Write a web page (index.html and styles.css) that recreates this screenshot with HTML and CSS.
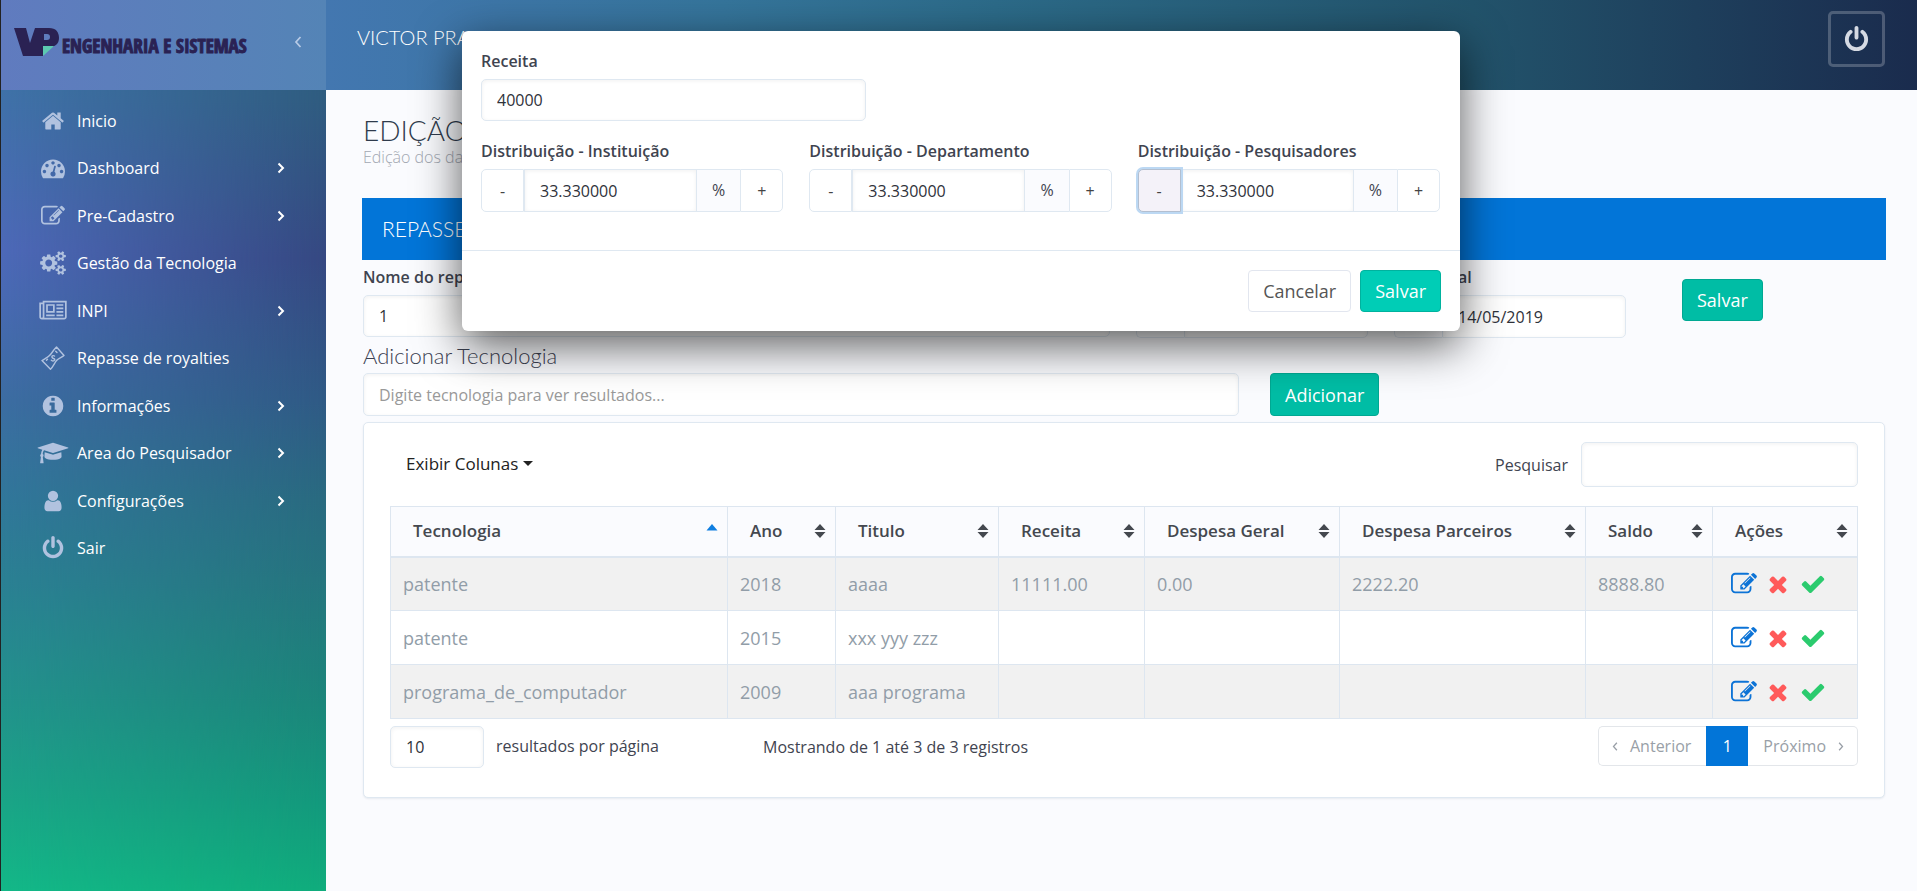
FILE: index.html
```html
<!DOCTYPE html>
<html lang="pt-BR">
<head>
<meta charset="utf-8">
<title>Repasse de royalties</title>
<link rel="stylesheet" href="styles.css">
</head>
<body>
<svg class="sprite" aria-hidden="true">
  <symbol id="i-home" viewBox="0 0 1792 1792"><path d="M1472 992v480q0 26-19 45t-45 19h-384v-384h-256v384h-384q-26 0-45-19t-19-45v-480q0-1 .5-3t.5-3l575-474 575 474q1 2 1 6zm223-69l-62 74q-8 9-21 11h-3q-13 0-21-7l-692-577-692 577q-12 8-24 7-13-2-21-11l-62-74q-8-10-7-23.5t11-21.5l719-599q32-26 76-26t76 26l244 204v-195q0-14 9-23t23-9h192q14 0 23 9t9 23v408l219 182q10 8 11 21.5t-7 23.5z"/></symbol>
  <symbol id="i-dash" viewBox="0 0 1792 1792"><path d="M384 1152q0-53-37.5-90.5t-90.5-37.5-90.5 37.5-37.5 90.5 37.5 90.5 90.5 37.5 90.5-37.5 37.5-90.5zm192-448q0-53-37.5-90.5t-90.5-37.5-90.5 37.5-37.5 90.5 37.5 90.5 90.5 37.5 90.5-37.5 37.5-90.5zm428 481l101-382q6-26-7.5-48.5t-38.5-29.5-48 6.5-30 39.5l-101 382q-60 5-107 43.5t-63 98.5q-20 77 20 146t117 89 146-20 89-117q16-60-6-117t-72-91zm660-33q0-53-37.5-90.5t-90.5-37.5-90.5 37.5-37.5 90.5 37.5 90.5 90.5 37.5 90.5-37.5 37.5-90.5zm-640-640q0-53-37.5-90.5t-90.5-37.5-90.5 37.5-37.5 90.5 37.5 90.5 90.5 37.5 90.5-37.5 37.5-90.5zm448 192q0-53-37.5-90.5t-90.5-37.5-90.5 37.5-37.5 90.5 37.5 90.5 90.5 37.5 90.5-37.5 37.5-90.5zm320 448q0 261-141 483-19 29-54 29h-1402q-35 0-54-29-141-221-141-483 0-182 71-348t191-286 286-191 348-71 348 71 286 191 191 286 71 348z"/></symbol>
  <symbol id="i-edit" viewBox="0 0 1792 1792"><path d="M888 1184l116-116-152-152-116 116v56h96v96h56zm440-720q-16-16-33 1l-350 350q-17 17-1 33t33-1l350-350q17-17 1-33zm80 594v190q0 119-84.5 203.5t-203.5 84.5h-832q-119 0-203.5-84.5t-84.5-203.5v-832q0-119 84.5-203.5t203.5-84.5h832q63 0 117 25 15 7 18 23 3 17-9 29l-49 49q-14 14-32 8-23-6-45-6h-832q-66 0-113 47t-47 113v832q0 66 47 113t113 47h832q66 0 113-47t47-113v-126q0-13 9-22l64-64q15-15 35-7t20 29zm-96-738l288 288-672 672h-288v-288zm444 132l-92 92-288-288 92-92q28-28 68-28t68 28l152 152q28 28 28 68t-28 68z"/></symbol>
  <symbol id="i-cogs" viewBox="0 0 1920 1792"><path d="M896 896q0-106-75-181t-181-75-181 75-75 181 75 181 181 75 181-75 75-181zm768 512q0-52-38-90t-90-38-90 38-38 90q0 53 37.5 90.5t90.5 37.5 90.5-37.5 37.5-90.5zm0-1024q0-52-38-90t-90-38-90 38-38 90q0 53 37.5 90.5t90.5 37.5 90.5-37.5 37.5-90.5zm-384 421v185q0 10-7 19.5t-16 10.5l-155 24q-11 35-32 76 34 48 90 115 7 11 7 20 0 12-7 19-23 30-82.5 89.5t-78.5 59.5q-11 0-21-7l-115-90q-37 19-77 31-11 108-23 155-7 24-30 24h-186q-11 0-20-7.5t-10-17.5l-23-153q-34-10-75-31l-118 89q-7 7-20 7-11 0-21-8-144-133-144-160 0-9 7-19 10-14 41-53t47-61q-23-44-35-82l-152-24q-10-1-17-9.5t-7-19.5v-185q0-10 7-19.5t16-10.5l155-24q11-35 32-76-34-48-90-115-7-11-7-20 0-12 7-20 22-30 82-89t79-59q11 0 21 7l115 90q34-18 77-32 11-108 23-154 7-24 30-24h186q11 0 20 7.5t10 17.5l23 153q34 10 75 31l118-89q8-7 20-7 11 0 21 8 144 133 144 160 0 8-7 19-12 16-42 54t-45 60q23 48 34 82l152 23q10 2 17 10.5t7 19.5zm640 533v140q0 16-149 31-12 27-30 52 51 113 51 138 0 4-4 7-122 71-124 71-8 0-46-47t-52-68q-20 2-30 2t-30-2q-14 21-52 68t-46 47q-2 0-124-71-4-3-4-7 0-25 51-138-18-25-30-52-149-15-149-31v-140q0-16 149-31 13-29 30-52-51-113-51-138 0-4 4-7 4-2 35-20t59-34 30-16q8 0 46 46.5t52 67.5q20-2 30-2t30 2q51-71 92-112l6-2q4 0 124 70 4 3 4 7 0 25-51 138 17 23 30 52 149 15 149 31zm0-1024v140q0 16-149 31-12 27-30 52 51 113 51 138 0 4-4 7-122 71-124 71-8 0-46-47t-52-68q-20 2-30 2t-30-2q-14 21-52 68t-46 47q-2 0-124-71-4-3-4-7 0-25 51-138-18-25-30-52-149-15-149-31v-140q0-16 149-31 13-29 30-52-51-113-51-138 0-4 4-7 4-2 35-20t59-34 30-16q8 0 46 46.5t52 67.5q20-2 30-2t30 2q51-71 92-112l6-2q4 0 124 70 4 3 4 7 0 25-51 138 17 23 30 52 149 15 149 31z"/></symbol>
  <symbol id="i-news" viewBox="0 0 2048 1792"><path d="M1024 512h-384v384h384v-384zm128 640v128h-640v-128h640zm0-768v640h-640v-640h640zm640 768v128h-512v-128h512zm0-256v128h-512v-128h512zm0-256v128h-512v-128h512zm0-256v128h-512v-128h512zm-1536 960v-960h-128v960q0 26 19 45t45 19 45-19 19-45zm1664 0v-1088h-1536v1088q0 33-11 64h1483q26 0 45-19t19-45zm128-1216v1216q0 80-56 136t-136 56h-1664q-80 0-136-56t-56-136v-1088h256v-128h1792z"/></symbol>
  <symbol id="i-note" viewBox="0 0 24 24"><g fill="none" stroke="currentColor" stroke-width="1.4" stroke-linejoin="round" stroke-linecap="round"><path d="M1 14.500C5 12 7.500 11 9.500 8.500S13 3.500 15.500 1L23 9.500C20 12 17.500 12 15.500 14.500S12 21 9.500 23.300Z"/><path d="M14.700 5.200L16 6.500M5.500 14.200L6.500 13.200"/><path d="M13.500 10C12 9 10.200 10.200 11.200 11.500S14.300 12.500 13.600 14S11 15.200 10.300 14.200"/></g></symbol>
  <symbol id="i-info" viewBox="0 0 1792 1792"><path d="M1152 1376v-160q0-14-9-23t-23-9h-96v-512q0-14-9-23t-23-9h-320q-14 0-23 9t-9 23v160q0 14 9 23t23 9h96v320h-96q-14 0-23 9t-9 23v160q0 14 9 23t23 9h448q14 0 23-9t9-23zm-128-896v-160q0-14-9-23t-23-9h-192q-14 0-23 9t-9 23v160q0 14 9 23t23 9h192q14 0 23-9t9-23zm640 416q0 209-103 385.500t-279.500 279.500-385.500 103-385.500-103-279.500-279.500-103-385.500 103-385.500 279.500-279.500 385.500-103 385.500 103 279.500 279.500 103 385.500z"/></symbol>
  <symbol id="i-grad" viewBox="0 0 2304 1792"><path d="M1774 836l18 316q4 69-82 128t-235 93.500-323 34.500-323-34.500-235-93.500-82-128l18-316 574 181q22 7 48 7t48-7zm530-324q0 23-22 31l-1120 352q-4 1-10 1t-10-1l-652-206q-43 34-71 111.500t-34 178.500q63 36 63 109 0 69-58 107l58 433q2 14-8 25-9 11-24 11h-192q-15 0-24-11-10-11-8-25l58-433q-58-38-58-107 0-73 65-111 11-207 98-330l-333-104q-22-8-22-31t22-31l1120-352q4-1 10-1t10 1l1120 352q22 8 22 31z"/></symbol>
  <symbol id="i-user" viewBox="0 0 1792 1792"><path d="M1536 1399q0 109-62.500 187t-150.500 78h-854q-88 0-150.500-78t-62.500-187q0-85 8.500-160.500t31.500-152 58.500-131 94-89 134.500-34.500q131 128 313 128t313-128q76 0 134.500 34.500t94 89 58.500 131 31.500 152 8.500 160.500zm-256-887q0 159-112.500 271.500t-271.500 112.500-271.500-112.500-112.500-271.500 112.500-271.500 271.500-112.500 271.500 112.500 112.500 271.500z"/></symbol>
  <symbol id="i-power" viewBox="0 0 1792 1792"><path d="M1664 896q0 156-61 298t-164 245-245 164-298 61-298-61-245-164-164-245-61-298q0-182 80.500-343t226.500-270q43-32 95.500-25t83.500 50q32 42 24.500 94.500t-49.500 84.500q-98 74-151.500 181t-53.500 228q0 104 40.500 198.500t109.500 163.500 163.500 109.500 198.500 40.500 198.500-40.500 163.500-109.500 109.500-163.500 40.500-198.500q0-121-53.500-228t-151.500-181q-42-32-49.500-84.500t24.500-94.500q31-43 84-50t95 25q146 109 226.500 270t80.500 343zm-640-768v640q0 52-38 90t-90 38-90-38-38-90v-640q0-52 38-90t90-38 90 38 38 90z"/></symbol>
  <symbol id="i-times" viewBox="0 0 1408 1792"><path transform="translate(-192 0)" d="M1490 1322q0 40-28 68l-136 136q-28 28-68 28t-68-28l-294-294-294 294q-28 28-68 28t-68-28l-136-136q-28-28-28-68t28-68l294-294-294-294q-28-28-28-68t28-68l136-136q28-28 68-28t68 28l294 294 294-294q28-28 68-28t68 28l136 136q28 28 28 68t-28 68l-294 294 294 294q28 28 28 68z"/></symbol>
  <symbol id="i-check" viewBox="0 0 1792 1792"><path d="M1671 566q0 40-28 68l-724 724-136 136q-28 28-68 28t-68-28l-136-136-362-362q-28-28-28-68t28-68l136-136q28-28 68-28t68 28l294 295 656-657q28-28 68-28t68 28l136 136q28 28 28 68z"/></symbol>
  <symbol id="i-right" viewBox="0 0 8 12"><path d="M1.500 1.500L6 6L1.500 10.500" fill="none" stroke="currentColor" stroke-width="2"/></symbol>
  <symbol id="i-left" viewBox="0 0 8 12"><path d="M6.500 1L2 6L6.500 11" fill="none" stroke="currentColor" stroke-width="1.700"/></symbol>
  <symbol id="i-sort" viewBox="0 0 12 14"><path d="M6 0L11.500 6H.5ZM6 14L.5 8H11.500Z"/></symbol>
  <symbol id="i-up" viewBox="0 0 12 14"><path d="M6 0L11.500 6.500H.5Z"/></symbol>
</svg>

<div class="app">
  <nav class="sidebar">
    <div class="brand">
      <svg class="logo" viewBox="0 0 46 30" role="img" aria-label="VP"><path fill="#2a2253" d="M0 1H12L16 16L21 1H35C42 1 45 5 45 11S41 20 35 20H31L29 29H9ZM30 7V13H33C35 13 36 12 36 10S35 7 33 7Z"/><path fill="#5cc9b0" d="M29 19H40L29 29Z"/></svg>
      <span class="brand-name">ENGENHARIA E SISTEMAS</span>
      <button class="collapse" aria-label="Recolher menu"><svg><use href="#i-left"/></svg></button>
    </div>
    <ul class="menu">
      <li><a href="#"><svg class="ico"><use href="#i-home"/></svg><span>Inicio</span></a></li>
      <li><a href="#"><svg class="ico"><use href="#i-dash"/></svg><span>Dashboard</span><svg class="chev"><use href="#i-right"/></svg></a></li>
      <li><a href="#"><svg class="ico"><use href="#i-edit"/></svg><span>Pre-Cadastro</span><svg class="chev"><use href="#i-right"/></svg></a></li>
      <li><a href="#"><svg class="ico"><use href="#i-cogs"/></svg><span>Gestão da Tecnologia</span></a></li>
      <li><a href="#"><svg class="ico"><use href="#i-news"/></svg><span>INPI</span><svg class="chev"><use href="#i-right"/></svg></a></li>
      <li><a href="#"><svg class="ico"><use href="#i-note"/></svg><span>Repasse de royalties</span></a></li>
      <li><a href="#"><svg class="ico"><use href="#i-info"/></svg><span>Informações</span><svg class="chev"><use href="#i-right"/></svg></a></li>
      <li><a href="#"><svg class="ico"><use href="#i-grad"/></svg><span>Area do Pesquisador</span><svg class="chev"><use href="#i-right"/></svg></a></li>
      <li><a href="#"><svg class="ico"><use href="#i-user"/></svg><span>Configurações</span><svg class="chev"><use href="#i-right"/></svg></a></li>
      <li><a href="#"><svg class="ico"><use href="#i-power"/></svg><span>Sair</span></a></li>
    </ul>
  </nav>

  <div class="page">
    <header class="topbar">
      <span class="user">VICTOR PRADO</span>
      <button class="power" aria-label="Sair"><svg><use href="#i-power"/></svg></button>
    </header>

    <main class="content">
      <h1>EDIÇÃO</h1>
      <p class="sub">Edição dos dados</p>
      <h2 class="bar">REPASSE</h2>

      <form class="row">
        <div class="field name"><label for="nome">Nome do repasse</label><input id="nome" class="box" value="1"></div>
        <div class="field date"><label for="ini">Data Inicial</label><div class="group"><span class="addon cal"></span><input id="ini" class="box" value=""></div></div>
        <div class="field date"><label for="fim">Data Final</label><div class="group"><span class="addon cal"></span><input id="fim" class="box" value="14/05/2019"></div></div>
        <button type="button" class="btn green save">Salvar</button>
      </form>

      <h3><label for="tec">Adicionar Tecnologia</label></h3>
      <div class="add">
        <input id="tec" class="box" placeholder="Digite tecnologia para ver resultados...">
        <button class="btn green">Adicionar</button>
      </div>

      <section class="panel">
        <div class="tools">
          <button class="cols">Exibir Colunas<i class="caret"></i></button>
          <label for="busca">Pesquisar</label><input id="busca" class="box search">
        </div>
        <table>
          <colgroup><col class="c1"><col class="c2"><col class="c3"><col class="c4"><col class="c5"><col class="c6"><col class="c7"><col class="c8"></colgroup>
          <thead><tr>
            <th><div>Tecnologia<svg class="sort on"><use href="#i-up"/></svg></div></th>
            <th><div>Ano<svg class="sort"><use href="#i-sort"/></svg></div></th>
            <th><div>Titulo<svg class="sort"><use href="#i-sort"/></svg></div></th>
            <th><div>Receita<svg class="sort"><use href="#i-sort"/></svg></div></th>
            <th><div>Despesa Geral<svg class="sort"><use href="#i-sort"/></svg></div></th>
            <th><div>Despesa Parceiros<svg class="sort"><use href="#i-sort"/></svg></div></th>
            <th><div>Saldo<svg class="sort"><use href="#i-sort"/></svg></div></th>
            <th><div>Ações<svg class="sort"><use href="#i-sort"/></svg></div></th>
          </tr></thead>
          <tbody>
            <tr><td>patente</td><td>2018</td><td>aaaa</td><td>11111.00</td><td>0.00</td><td>2222.20</td><td>8888.80</td><td><div class="acts"><button aria-label="Editar" class="edit"><svg><use href="#i-edit"/></svg></button><button aria-label="Excluir" class="del"><svg><use href="#i-times"/></svg></button><button aria-label="Confirmar" class="ok"><svg><use href="#i-check"/></svg></button></div></td></tr>
            <tr><td>patente</td><td>2015</td><td>xxx yyy zzz</td><td></td><td></td><td></td><td></td><td><div class="acts"><button aria-label="Editar" class="edit"><svg><use href="#i-edit"/></svg></button><button aria-label="Excluir" class="del"><svg><use href="#i-times"/></svg></button><button aria-label="Confirmar" class="ok"><svg><use href="#i-check"/></svg></button></div></td></tr>
            <tr><td>programa_de_computador</td><td>2009</td><td>aaa programa</td><td></td><td></td><td></td><td></td><td><div class="acts"><button aria-label="Editar" class="edit"><svg><use href="#i-edit"/></svg></button><button aria-label="Excluir" class="del"><svg><use href="#i-times"/></svg></button><button aria-label="Confirmar" class="ok"><svg><use href="#i-check"/></svg></button></div></td></tr>
          </tbody>
        </table>
        <div class="foot">
          <select id="pp" class="box size"><option>10</option></select>
          <label for="pp">resultados por página</label>
          <span class="count">Mostrando de 1 até 3 de 3 registros</span>
          <div class="pager">
            <button class="pg prev"><svg><use href="#i-left"/></svg>Anterior</button><button class="pg cur">1</button><button class="pg next">Próximo<svg class="flip"><use href="#i-left"/></svg></button>
          </div>
        </div>
      </section>
    </main>
  </div>
</div>

<div class="overlay">
  <form class="modal" role="dialog" aria-label="Receita">
    <div class="modal-body">
      <div class="field half"><label for="rec">Receita</label><input id="rec" class="box" value="40000"></div>
      <div class="thirds">
        <div class="field"><label for="d1">Distribuição - Instituição</label><div class="group"><button type="button" class="step">-</button><input id="d1" class="box" value="33.330000"><span class="addon">%</span><button type="button" class="step">+</button></div></div>
        <div class="field"><label for="d2">Distribuição - Departamento</label><div class="group"><button type="button" class="step">-</button><input id="d2" class="box" value="33.330000"><span class="addon">%</span><button type="button" class="step">+</button></div></div>
        <div class="field"><label for="d3">Distribuição - Pesquisadores</label><div class="group"><button type="button" class="step focus">-</button><input id="d3" class="box" value="33.330000"><span class="addon">%</span><button type="button" class="step">+</button></div></div>
      </div>
    </div>
    <div class="modal-foot">
      <button type="button" class="btn plain">Cancelar</button>
      <button type="button" class="btn bright">Salvar</button>
    </div>
  </form>
</div>
</body>
</html>
```

FILE: styles.css
```css
* { box-sizing: border-box; }
body { margin: 0; font: 16px/24px "Open Sans", sans-serif; color: #3f4450; background: #fafbfe; }
button, input, select { font: inherit; color: inherit; margin: 0; }
button { cursor: pointer; }
svg { fill: currentColor; display: block; }
h1, h2, h3, p, ul { margin: 0; padding: 0; }
.sprite { display: none; }

.app { display: grid; grid-template-columns: 326px 1fr; min-height: 100vh; }

/* sidebar */
.sidebar {
  position: relative;
  isolation: isolate;
  border-left: 1px solid #222;
  background: linear-gradient(#3c74a8, #3f72a8 10%, #4d69b8 28%, #486ab2 34%, #3c6da2 45%, #31779a 56%, #2b8094 65%, #22938c 79%, #1aa587 90%, #13b888);
}
.sidebar::before {
  content: "";
  position: absolute;
  inset: 0;
  z-index: -1;
  background: linear-gradient(#2f6080, #2f5c80 11%, #354882 29%, #2f5a85 45%, #296a80 56%, #25747e 65%, #1b867a 79%, #13997c 90%, #10ac7c);
  mask-image: linear-gradient(90deg, transparent, #000);
}
.brand { height: 90px; padding: 0 20px 6px 13px; display: flex; align-items: center; background: linear-gradient(90deg, #607bbf, #5484b6); }
.logo { width: 46px; height: 30px; }
.brand-name { font: 700 19px/24px "Liberation Sans Narrow", "Open Sans Condensed", "Liberation Sans", sans-serif; color: #2a2253; -webkit-text-stroke: 1px #2a2253; padding: 8px 0 0 2px; white-space: nowrap; flex: 1; }
.collapse { border: 0; background: none; padding: 4px; color: #b9cbe6; }
.collapse svg { width: 8px; height: 12px; }
.menu { list-style: none; display: grid; grid-auto-rows: 1fr; min-height: 475px; padding: 0 41px 0 36px; margin-top: 7px; }
.menu a { display: flex; align-items: center; height: 100%; color: #fff; text-decoration: none; }
.ico { width: 32px; height: 24px; color: #b1c2df; margin-right: 8px; }
.menu span { flex: 1; }
.chev { width: 8px; height: 12px; }

/* top bar */
.topbar {
  height: 90px; padding: 0 34px 12px 31px; display: flex; align-items: center; justify-content: space-between;
  color: #fff; background: linear-gradient(90deg, #4377b0, #35759b 25%, #2c6b89 42%, #22536b 72%, #1a2b4d);
}
.user { font: 300 20px/24px Lato, "Open Sans", sans-serif; padding-bottom: 4px; }
.power { width: 57px; height: 56px; border: 3px solid rgba(255, 255, 255, .22); border-radius: 5px; background: none; color: #d5dae3; display: grid; place-items: center; }
.power svg { width: 27px; height: 27px; }

/* content */
.content { padding: 23px 34px 24px 37px; }
h1 { font: 300 28px/34px Lato, sans-serif; color: #2f3b4c; }
.sub { font-weight: 300; line-height: 20px; color: #a2a8b2; }
h2.bar { margin: 31px -1px 6px -1px; padding: 0 20px; font: 300 21px/62px Lato, sans-serif; color: #fff; background: #0275d8; }
h3 { margin: 6px 0 5px; font: 300 22px/24px Lato, sans-serif; color: #3c4152; }
.field { display: flex; flex-direction: column; gap: 7px; }
.field > label { font-weight: 600; line-height: 22px; }
.box {
  height: 42px; width: 100%; min-width: 0; padding: 0 15px; color: #2f323a; background: #fff;
  border: 1px solid #dfe8f1; border-radius: 5px; box-shadow: inset 0 1px 4px rgba(0, 0, 0, .06); outline: 0;
}
.box::placeholder { color: #999; opacity: 1; }
.row { display: flex; gap: 26px; }
.name { flex: 1; max-width: 747px; }
.date { width: 232px; }
.group { display: flex; }
.group > * { border-radius: 0; }
.group > :first-child { border-radius: 5px 0 0 5px; }
.group > :last-child { border-radius: 0 5px 5px 0; }
.group > .box, .add > .box, .add > .btn { height: 43px; }
.addon { height: 43px; padding: 0 15px; line-height: 41px; background: #fafbfe; border: 1px solid #dfe8f1; border-width: 1px 0; }
.addon.cal { width: 48px; flex: none; border-left-width: 1px; }
.btn { height: 42px; padding: 0 14px; border-radius: 4px; border: 1px solid; font-size: 18px; white-space: nowrap; }
.green { background: #00bda5; border-color: #00a892; color: #fff; }
.bright { background: #00cdb6; border-color: #00b29e; color: #fff; }
.plain { background: #fff; border-color: #e2e6ef; color: #555; }
.save { margin: 13px 0 0 30px; align-self: flex-start; }
.add { display: flex; gap: 31px; margin-bottom: 6px; }
.add .box { width: 876px; flex: 0 1 auto; }

/* table panel */
.panel { background: #fff; border: 1px solid #dfe8f1; border-radius: 5px; padding: 19px 26px 29px 26px; box-shadow: 0 1px 2px rgba(0, 40, 80, .08); }
.tools { display: flex; align-items: center; margin-bottom: 19px; }
.cols { border: 0; background: none; padding: 0 0 2px 16px; font-size: 17px; color: #222; display: flex; align-items: center; gap: 5px; margin-right: auto; }
.caret { border: 5px solid transparent; border-top-color: #222; border-bottom: 0; }
.search { width: 277px; height: 45px; margin-left: 13px; }
table { width: 100%; border-collapse: collapse; table-layout: fixed; font-size: 18px; }
.c1 { width: 337px; } .c2 { width: 108px; } .c3 { width: 163px; } .c4 { width: 146px; }
.c5 { width: 195px; } .c6 { width: 246px; } .c7 { width: 127px; } .c8 { width: 145px; }
th, td { border: 1px solid #dde6f0; text-align: left; }
th { height: 50px; padding: 0 9px 0 22px; background: #fafbfe; border-bottom-width: 2px; font-size: 17px; font-weight: 600; color: #44484f; }
th div { display: flex; align-items: center; justify-content: space-between; white-space: nowrap; }
.sort { width: 12px; height: 14px; }
.on { color: #0f7ee0; }
td { height: 54px; padding: 0 12px; color: #919da8; }
tbody tr:nth-child(odd) { background: #f1f1f1; }
.acts { display: flex; align-items: center; padding-left: 6px; gap: 11px; }
.acts button { border: 0; padding: 0; background: none; }
.acts svg { height: 26px; width: 26px; }
.acts .edit { color: #0c73d6; }
.acts .del { color: #ff5a5a; }
.acts .ok { color: #2bcb6e; margin-left: 1px; }
.acts .del svg { width: 20px; }
.foot { display: flex; align-items: flex-start; margin-top: 7px; line-height: 40px; }
.size { width: 94px; flex: none; margin-right: 12px; appearance: none; }
.count { margin-left: 104px; line-height: 42px; }
.pager { display: flex; margin-left: auto; }
.pg { height: 40px; padding: 0 13px; border: 1px solid #e3e6ea; background: #fff; color: #999fa7; display: flex; align-items: center; gap: 12px; }
.pg svg { width: 6px; height: 9px; }
.flip { transform: scaleX(-1); }
.prev { border-right: 0; border-radius: 5px 0 0 5px; padding-right: 15px; }
.next { border-left: 0; border-radius: 0 5px 5px 0; padding-left: 15px; }
.cur { width: 42px; justify-content: center; background: #0275d8; border-color: #0275d8; color: #fff; }

/* dialog */
.overlay { position: absolute; inset: 31px 0 auto 5px; display: flex; justify-content: center; }
.modal { width: 998px; max-width: 100%; background: #fff; border-radius: 6px; box-shadow: 0 14px 46px rgba(0, 0, 0, .65); }
.modal-body { padding: 19px 20px 38px 19px; border-bottom: 1px solid #dfe8f1; }
.half { width: 385px; margin-bottom: 19px; }
.thirds { display: grid; grid-template-columns: repeat(3, 1fr); gap: 26px; }
.step { width: 43px; flex: none; border: 1px solid #dfe8f1; background: #fff; color: #444; padding: 0; }
.focus { background: #f4f2f9; border-color: #b3bfd0; box-shadow: 0 0 0 2px #bcd8f3; z-index: 1; }
.modal-foot { padding: 19px; display: flex; justify-content: flex-end; gap: 9px; }
```
